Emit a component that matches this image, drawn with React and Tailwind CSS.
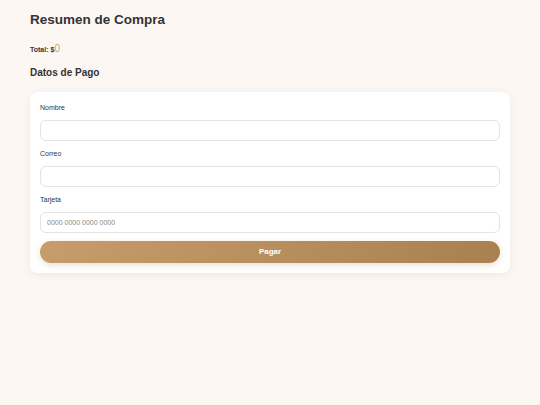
const Field = ({ label, placeholder }) => (
  <div className="flex flex-col">
    <label className="text-[7px] text-[#333] mb-[8px] leading-[9px]">{label}</label>
    <input
      type="text"
      placeholder={placeholder}
      className="h-[21px] w-full rounded-[6px] border border-[#e4e4e4] bg-white px-[6px] text-[7px] text-[#333] placeholder:text-[#888] outline-none"
    />
  </div>
);

const App = () => {
  return (
    <div className="min-h-[405px] w-[540px] bg-[#fdf7f4] px-[30px] pt-[11px] font-['Liberation_Sans',Arial,sans-serif] text-[#333]">
      <h1 className="text-[13.5px] font-bold leading-[17px]">Resumen de Compra</h1>
      <p className="mt-[16px] text-[7px] font-bold leading-[10px]">
        Total: $<span className="text-[10px] font-normal text-[#c9a06d]">0</span>
      </p>
      <h2 className="mt-[11px] text-[10px] font-bold leading-[13px]">Datos de Pago</h2>

      <div className="mt-[13px] rounded-[8px] bg-white px-[10px] pt-[11px] pb-[10px] shadow-[0_2px_10px_rgba(0,0,0,0.06)] flex flex-col gap-[8px]">
        <Field label="Nombre" />
        <Field label="Correo" />
        <Field label="Tarjeta" placeholder="0000 0000 0000 0000" />
        <button
          type="button"
          className="h-[22px] w-full rounded-full bg-gradient-to-r from-[#c79c6c] to-[#a98150] text-[8px] font-bold text-white shadow-[0_2px_6px_rgba(201,160,109,0.35)]"
        >
          Pagar
        </button>
      </div>
    </div>
  );
};

export default App;
